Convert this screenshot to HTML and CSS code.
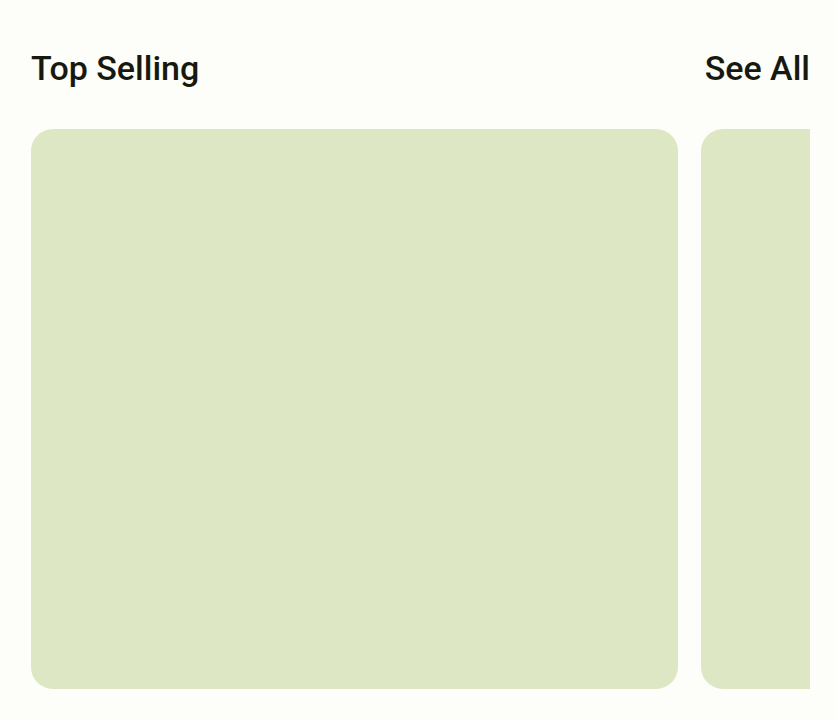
FILE: index.html
```html
<!DOCTYPE html>
<html>
<head>
<meta charset="utf-8">
<link rel="stylesheet" href="styles.css">
</head>
<body>
<main class="page">
  <header class="section-head">
    <h2 class="title">Top Selling</h2>
    <a class="see-all" href="#">See All</a>
  </header>
  <div class="carousel">
    <div class="card"></div>
    <div class="card"></div>
  </div>
</main>
</body>
</html>
```
FILE: styles.css
```css
html, body {
  margin: 0;
  padding: 0;
  background: #fdfdf9;
}
.page {
  width: 779px;
  padding: 0 0 0 31px;
  font-family: Roboto, "Noto Sans", sans-serif;
}
.section-head {
  display: flex;
  justify-content: space-between;
  align-items: center;
  padding-top: 48px;
  padding-bottom: 41px;
}
.title, .see-all {
  margin: 0;
  font-size: 34px;
  font-weight: 500;
  color: #17190f;
  text-decoration: none;
  line-height: 40px;
}
.carousel {
  display: flex;
  gap: 23px;
  overflow: hidden;
}
.card {
  flex: 0 0 647px;
  height: 560px;
  border-radius: 22px;
  background: #dde7c3;
}
```
